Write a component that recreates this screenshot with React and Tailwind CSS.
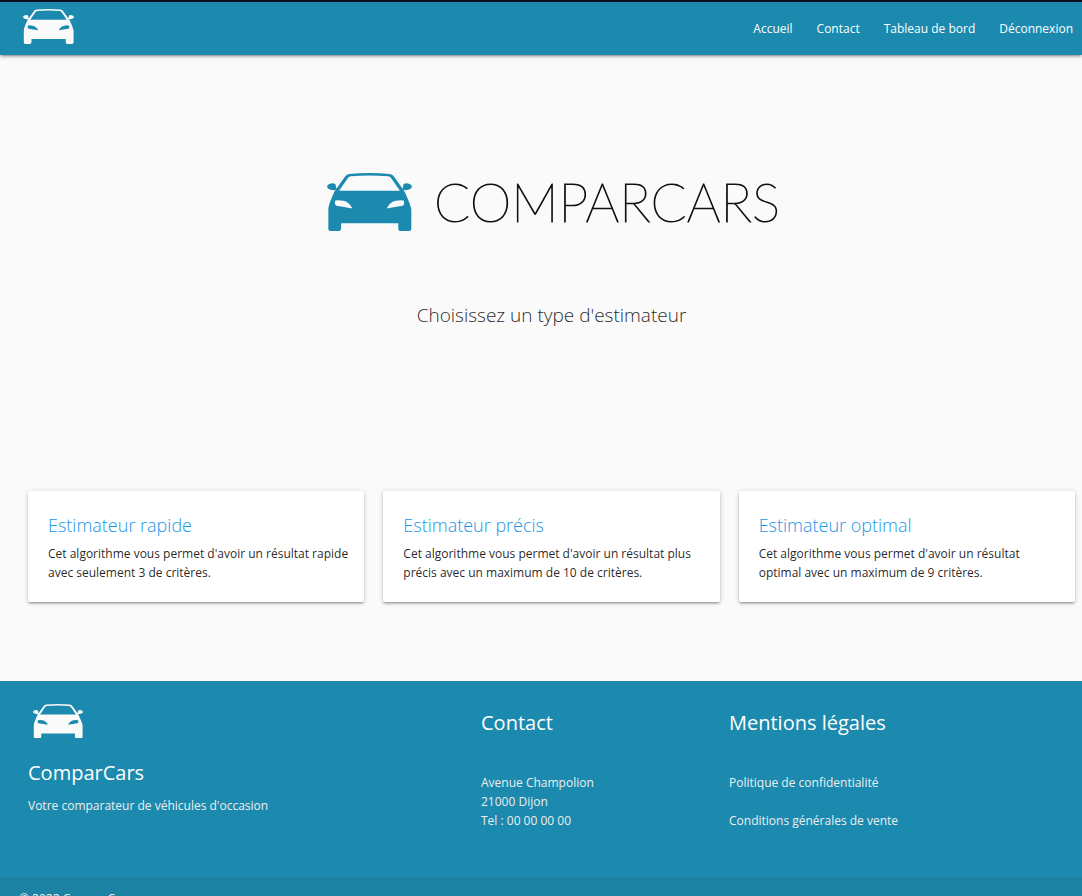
function Car({ className }) {
  return (
    <svg viewBox="0 0 254 174" className={className} fill="currentColor" aria-hidden="true">
      <path
        fillRule="evenodd"
        d="M4 108C5 94 14 74 23 54L27 50Q15 54 3 46Q-2 40 3 35Q14 27 25 33L28 47L53 12Q57 5 66 3Q127 -3 188 3Q197 5 201 12L226 47L229 33Q240 27 251 35Q256 40 251 46Q239 54 227 50L231 54C240 74 249 94 252 108V166Q252 174 244 174H221Q213 174 213 166V150H42V166Q42 174 34 174H12Q4 174 4 166ZM36 53H218L193 17Q190 11 183 10Q127 5 71 10Q64 11 61 17ZM25 82Q21 94 28 98Q50 102 76 106Q66 86 48 83Q36 80 25 82ZM229 82Q233 94 226 98Q204 102 178 106Q188 86 206 83Q218 80 229 82Z"
      />
    </svg>
  );
}

const links = ["Accueil", "Contact", "Tableau de bord", "Déconnexion"];

const estimators = [
  {
    title: "Estimateur rapide",
    text: "Cet algorithme vous permet d'avoir un résultat rapide avec seulement 3 de critères.",
  },
  {
    title: "Estimateur précis",
    text: "Cet algorithme vous permet d'avoir un résultat plus précis avec un maximum de 10 de critères.",
  },
  {
    title: "Estimateur optimal",
    text: "Cet algorithme vous permet d'avoir un résultat optimal avec un maximum de 9 critères.",
  },
];

export default function App() {
  return (
    <div className="bg-[#fafafa] font-['Open_Sans','Noto_Sans',sans-serif] text-[12px] leading-[19px] text-black/87">
      <header className="border-t-2 border-[#0a0f1e] bg-[#1b8aae] text-white shadow-[0_2px_2px_0_rgba(0,0,0,0.14),0_3px_1px_-2px_rgba(0,0,0,0.12),0_1px_5px_0_rgba(0,0,0,0.2)]">
        <nav className="flex h-[53px] items-center justify-between pr-[9px] pl-[23px]">
          <a href="#" aria-label="ComparCars" className="pb-1 text-[#fafafa]">
            <Car className="w-[51px]" />
          </a>
          <ul className="flex gap-6">
            {links.map((link) => (
              <li key={link}>
                <a href="#">{link}</a>
              </li>
            ))}
          </ul>
        </nav>
      </header>

      <main className="pr-[7px] pb-[79px] pl-[28px]">
        <section className="flex flex-col items-center pt-[118px]">
          <h1 className="flex items-center gap-[22px] pl-1 text-[#111]">
            <Car className="w-[85px] text-[#1b8aae]" />
            <span className="font-['Lato',sans-serif] text-[53px] leading-[58px] font-extralight [-webkit-text-stroke:1px_#111]">
              COMPARCARS
            </span>
          </h1>
          <p className="mt-[70px] text-[19px] leading-[28px] font-light">Choisissez un type d'estimateur</p>
        </section>

        <section className="mt-[162px] grid grid-cols-3 gap-[19px]">
          {estimators.map((item) => (
            <a
              key={item.title}
              href="#"
              className="rounded-[2px] bg-white py-5 pr-3 pl-5 shadow-[0_2px_2px_0_rgba(0,0,0,0.14),0_3px_1px_-2px_rgba(0,0,0,0.12),0_1px_5px_0_rgba(0,0,0,0.2)]"
            >
              <h2 className="mb-[5px] text-[18px] leading-[28px] font-light text-[#2196e8]">{item.title}</h2>
              <p>{item.text}</p>
            </a>
          ))}
        </section>
      </main>

      <footer className="bg-[#1b8aae] text-[#eeeeee]">
        <div className="grid min-h-[196px] grid-cols-[453fr_248fr_346fr] pt-[22px] pr-[7px] pl-[28px]">
          <div>
            <Car className="mt-px ml-[5px] w-[50px] text-[#fafafa]" />
            <h2 className="mt-[21px] text-[20px] leading-[28px] text-white">ComparCars</h2>
            <p className="mt-[9px]">Votre comparateur de véhicules d'occasion</p>
          </div>
          <div>
            <h2 className="mt-[6px] text-[20px] leading-[28px] text-white">Contact</h2>
            <address className="mt-[36px] not-italic">
              Avenue Champolion
              <br />
              21000 Dijon
              <br />
              Tel : 00 00 00 00
            </address>
          </div>
          <div>
            <h2 className="mt-[6px] text-[20px] leading-[28px] text-white">Mentions légales</h2>
            <ul className="mt-[36px] flex flex-col gap-[19px]">
              <li>
                <a href="#">Politique de confidentialité</a>
              </li>
              <li>
                <a href="#">Conditions générales de vente</a>
              </li>
            </ul>
          </div>
        </div>
        <div className="bg-[rgba(51,51,51,0.08)] px-[19px] py-3">© 2022 ComparCars</div>
      </footer>
    </div>
  );
}
